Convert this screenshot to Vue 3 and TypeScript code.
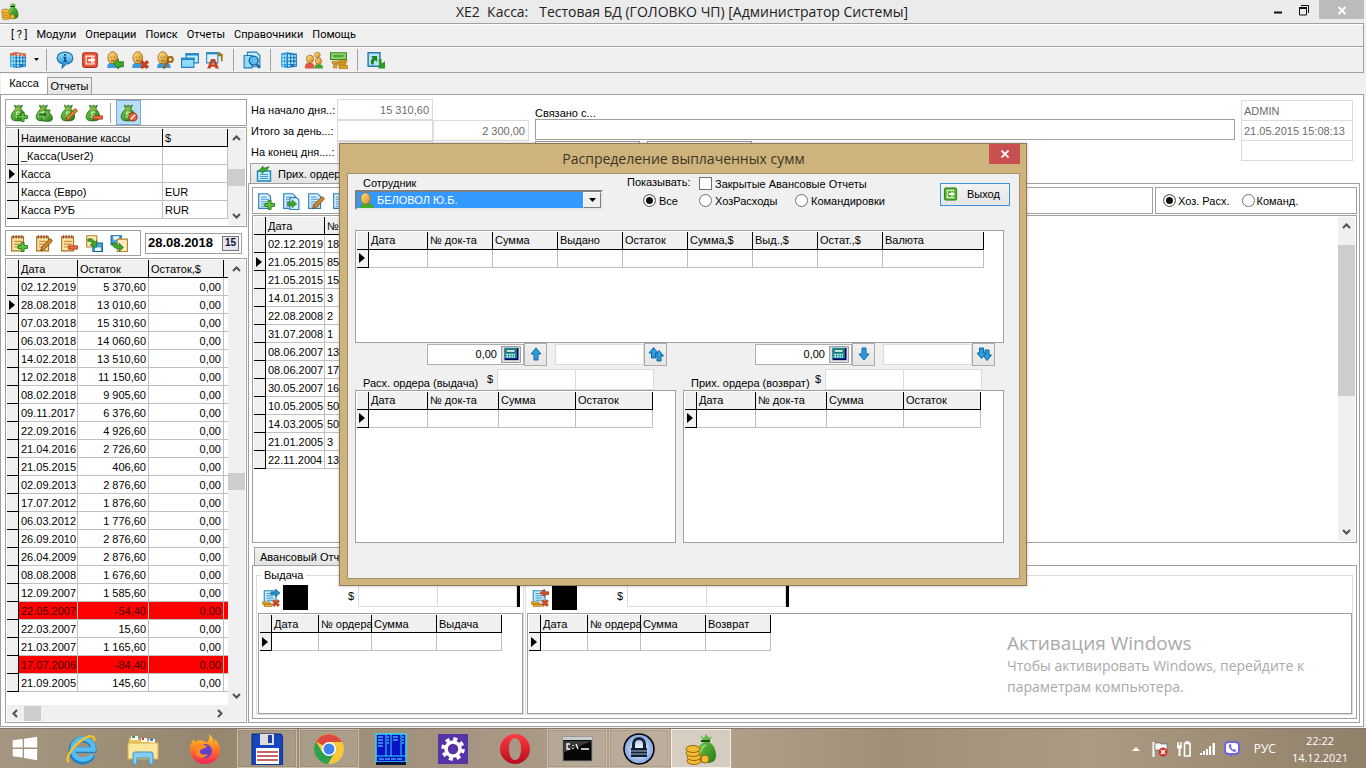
<script setup lang="ts">
import { ref } from 'vue'

interface Tool { id: string; label: string; layers: string[]; sep?: boolean; on?: boolean; drop?: boolean }
interface Order { title: string; id: string; one: string; many: string }

const menu = ['[ ? ]', 'Модули', 'Операции', 'Поиск', 'Отчеты', 'Справочники', 'Помощь']

const mainTools: Tool[] = [
  { id: 'm1', label: 'Касса', layers: ['building', 'roof'], drop: true },
  { id: 'm2', label: 'О программе', layers: ['info'], sep: true },
  { id: 'm3', label: 'Выход', layers: ['exit-red'] },
  { id: 'm4', label: 'Войти', layers: ['user', 'ov-left'] },
  { id: 'm5', label: 'Отключить', layers: ['user', 'ov-x'] },
  { id: 'm6', label: 'Пароль', layers: ['user', 'ov-key'] },
  { id: 'm7', label: 'Окна', layers: ['windows'] },
  { id: 'm8', label: 'Шрифт', layers: ['font'] },
  { id: 'm9', label: 'Поиск', layers: ['find'], sep: true },
  { id: 'm10', label: 'Организации', layers: ['building'], sep: true },
  { id: 'm11', label: 'Сотрудники', layers: ['people'] },
  { id: 'm12', label: 'Валюты', layers: ['cash'] },
  { id: 'm13', label: 'Обновить', layers: ['refresh'], sep: true },
]
const bagTools: Tool[] = [
  { id: 'b1', label: 'Добавить кассу', layers: ['bag', 'ov-plus'] },
  { id: 'b2', label: 'Копировать кассу', layers: ['bag', 'ov-bag'] },
  { id: 'b3', label: 'Изменить кассу', layers: ['bag', 'ov-pencil'] },
  { id: 'b4', label: 'Удалить кассу', layers: ['bag', 'ov-minus'] },
  { id: 'b5', label: 'Закрытые кассы', layers: ['bag', 'ov-no'], sep: true, on: true },
]
const dayTools: Tool[] = [
  { id: 'd1', label: 'Добавить день', layers: ['note', 'ov-plus'] },
  { id: 'd2', label: 'Изменить день', layers: ['note', 'ov-pencil'] },
  { id: 'd3', label: 'Удалить день', layers: ['note', 'ov-minus'] },
  { id: 'd4', label: 'Выгрузить', layers: ['export'] },
  { id: 'd5', label: 'Загрузить', layers: ['import'] },
]
const orderTools: Tool[] = [
  { id: 'o1', label: 'Добавить ордер', layers: ['doc', 'ov-plus'] },
  { id: 'o2', label: 'Копировать ордер', layers: ['doc', 'ov-doc'] },
  { id: 'o3', label: 'Изменить ордер', layers: ['doc', 'ov-pencil'] },
  { id: 'o4', label: 'Удалить ордер', layers: ['doc', 'ov-minus'] },
]

const desks = [['_Касса(User2)', ''], ['Касса', ''], ['Касса (Евро)', 'EUR'], ['Касса РУБ', 'RUR']]
const days = [
  ['02.12.2019', '5 370,60'], ['28.08.2018', '13 010,60'], ['07.03.2018', '15 310,60'], ['06.03.2018', '14 060,60'],
  ['14.02.2018', '13 510,60'], ['12.02.2018', '11 150,60'], ['08.02.2018', '9 905,60'], ['09.11.2017', '6 376,60'],
  ['22.09.2016', '4 926,60'], ['21.04.2016', '2 726,60'], ['21.05.2015', '406,60'], ['02.09.2013', '2 876,60'],
  ['17.07.2012', '1 876,60'], ['06.03.2012', '1 776,60'], ['26.09.2010', '2 876,60'], ['26.04.2009', '2 876,60'],
  ['08.08.2008', '1 676,60'], ['12.09.2007', '1 585,60'], ['22.05.2007', '-54,40'], ['22.03.2007', '15,60'],
  ['21.03.2007', '1 165,60'], ['17.07.2006', '-84,40'], ['21.09.2005', '145,60'],
]
const orders = [
  ['02.12.2019', '18'], ['21.05.2015', '85'], ['21.05.2015', '15'], ['14.01.2015', '3'], ['22.08.2008', '2'],
  ['31.07.2008', '1'], ['08.06.2007', '13'], ['08.06.2007', '17'], ['30.05.2007', '16'], ['10.05.2005', '50'],
  ['14.03.2005', '50'], ['21.01.2005', '3'], ['22.11.2004', '13'],
]
const reportCols = ['Дата', '№ док-та', 'Сумма', 'Выдано', 'Остаток', 'Сумма,$', 'Выд.,$', 'Остат.,$', 'Валюта']
const orderCols = ['Дата', '№ док-та', 'Сумма', 'Остаток']
const panes: Order[] = [
  { title: 'Расх. ордера (выдача)', id: 'out', one: 'up', many: 'up2' },
  { title: 'Прих. ордера (возврат)', id: 'in', one: 'down', many: 'down2' },
]
const groups = [
  { id: 'g1', legend: 'Выдача', icon: 'pay-out', last: 'Выдача' },
  { id: 'g2', legend: '', icon: 'pay-in', last: 'Возврат' },
]
const tasks = [
  { id: 't-win', label: 'Пуск', state: 'start' }, { id: 't-ie', label: 'Internet Explorer', state: '' },
  { id: 't-exp', label: 'Проводник', state: '' }, { id: 't-ff', label: 'Firefox', state: '' },
  { id: 't-disk', label: 'Total Commander', state: 'run' }, { id: 't-chrome', label: 'Chrome', state: 'run' },
  { id: 't-far', label: 'Far', state: '' }, { id: 't-gear', label: 'Параметры', state: '' },
  { id: 't-opera', label: 'Opera', state: '' }, { id: 't-cmd', label: 'Командная строка', state: 'run' },
  { id: 't-lock', label: 'KeePass', state: 'run' }, { id: 't-money', label: 'Касса', state: 'active' },
]
const kind = ref('all')
const mode = ref('house')
const closed = ref(false)
const day = ref('28.08.2018')
const amount = ref('0,00')
</script>

<template>
  <div class="screen">
    <svg class="defs" aria-hidden="true">
      <defs>
        <linearGradient id="gb" x1="0" y1="0" x2="0" y2="1"><stop offset="0" stop-color="#9fe3ff" /><stop offset="1" stop-color="#1583cf" /></linearGradient>
        <linearGradient id="gg" x1="0" y1="0" x2="1" y2="1"><stop offset="0" stop-color="#7dd65a" /><stop offset="1" stop-color="#237d14" /></linearGradient>
        <linearGradient id="gy" x1="0" y1="0" x2="1" y2="1"><stop offset="0" stop-color="#ffe694" /><stop offset="1" stop-color="#d08a18" /></linearGradient>
        <linearGradient id="gf" x1="0" y1="0" x2="0" y2="1"><stop offset="0" stop-color="#ffd12e" /><stop offset=".5" stop-color="#ff7a22" /><stop offset="1" stop-color="#f4205c" /></linearGradient>
        <linearGradient id="go" x1="0" y1="0" x2="0" y2="1"><stop offset="0" stop-color="#ff3b42" /><stop offset="1" stop-color="#b80c1c" /></linearGradient>
        <radialGradient id="gl"><stop offset="0" stop-color="#fff" /><stop offset="1" stop-color="#7da2e4" /></radialGradient>
      </defs>
      <symbol id="building" viewBox="0 0 16 16"><path d="M1 2l5-1v14l-5-1z" fill="#2f9fe3" /><path d="M6 1l9 1.500V14l-9 1z" fill="#1578bd" /><path d="M2 3.500h1.500v2H2zM4.200 3.200h1.200v2.300H4.200zM2 6.500h1.500v2H2zM4.200 6.500h1.200v2H4.200zM2 9.500h1.500v2H2zM4.200 9.500h1.200v2H4.200zM2 12.300h1.500v1.200H2zM7 3h2v2.500H7zM10 3.300h1.800v2.200H10zM12.800 3.500H14v2h-1.200zM7 6.500h2v2H7zM10 6.500h1.800v2H10zM12.800 6.500H14v2h-1.200zM7 9.500h2v2H7zM10 9.500h1.800v2H10zM12.800 9.500H14v2h-1.200zM7 12.300h2v1.500H7zM12.800 12.300H14v1h-1.200z" fill="#b9ecff" /></symbol>
      <symbol id="roof" viewBox="0 0 16 16"><path d="M1 2l5-1 9 1.500V5L6 3.500 1 4.500z" fill="#e9643b" /><path d="M7 2.500h2v1H7zM10.500 3h2v1h-2z" fill="#fbd8c8" /></symbol>
      <symbol id="info" viewBox="0 0 16 16"><path d="M8 1c4 0 7 2.200 7 5.200S12 11.500 9 11.500L5.500 15l.3-3.800C3 10.700 1 8.700 1 6.200 1 3.200 4 1 8 1z" fill="url(#gb)" stroke="#1874ac" /><path d="M7.200 2.700h1.800v1.600H7.200zM6.500 5.200h2.500v3.600h1v1H6.500v-1h.8V6.200h-.8z" fill="#0b4d87" /></symbol>
      <symbol id="exit-red" viewBox="0 0 16 16"><rect x="1.500" y="1.500" width="13" height="13" rx="2" fill="#e8593b" stroke="#ab3219" /><path d="M12 4H4v8h8v-2h-1v1H5V5h6v1h1z" fill="#fff" /><path d="M6.500 7H9V5l4 3-4 3V9H6.500z" fill="#fff" /></symbol>
      <symbol id="user" viewBox="0 0 16 16"><path d="M1 15c0-4 2-5 6-5s6 1 6 5z" fill="#3a9ce0" /><ellipse cx="6" cy="6" rx="4.300" ry="5.300" fill="url(#gy)" stroke="#a96c16" stroke-width=".8" /><path d="M4 5.500h1M7 5.500h1M4.500 8.500h3" stroke="#8a5513" stroke-width=".8" /></symbol>
      <symbol id="user-green" viewBox="0 0 16 16"><path d="M2 16c0-4 3-5 7-5s7 2 7 5z" fill="#47a929" /><ellipse cx="7.500" cy="6.500" rx="4.800" ry="5.800" fill="url(#gy)" stroke="#8a6420" stroke-width=".8" /></symbol>
      <symbol id="ov-left" viewBox="0 0 16 16"><path d="M6.500 11l4.500-4v2.500h4.500V14H11v2z" fill="#3cab25" stroke="#1f6e12" stroke-width=".7" /></symbol>
      <symbol id="ov-x" viewBox="0 0 16 16"><path d="M9 9l6 6M15 9l-6 6" stroke="#c8401c" stroke-width="3" /></symbol>
      <symbol id="ov-key" viewBox="0 0 16 16"><circle cx="12.700" cy="7.500" r="2.300" fill="#f6dc98" stroke="#94600e" stroke-width="1.600" /><path d="M11 9.500L6.500 14.500l1.500 1 M8.500 12l1.500 1.500" fill="none" stroke="#94600e" stroke-width="1.600" /></symbol>
      <symbol id="windows" viewBox="0 0 16 16"><path d="M4.500 2.500h11v8h-11z" fill="#bceaff" stroke="#2082bd" /><path d="M4 2h12v2H4z" fill="#2588c4" /><path d="M.5 6.500h11v8H.5z" fill="#92d9fa" stroke="#2082bd" /><path d="M0 6h12v2H0z" fill="#2588c4" /></symbol>
      <symbol id="font" viewBox="0 0 16 16"><path d="M.5 1.500h10v9H.5z" fill="#dff3fc" stroke="#2b8bc4" /><path d="M0 1h11v2H0z" fill="#2b8bc4" /><path d="M1 15.500L4.500 7h3.500l3.500 8.500H8.500L8 14H4.500L4 15.500zM5.200 12h2.200L6.200 9z" fill="#c8401c" /><path d="M14 9V4h-3.500" fill="none" stroke="#a37418" stroke-width="1.500" /><path d="M11 .5V4l4.500-.5z" fill="#a37418" /></symbol>
      <symbol id="find" viewBox="0 0 16 16"><path d="M4 1h8l3 3v10H4z" fill="#c9edff" stroke="#237bb8" /><path d="M1 4h7v11H1z" fill="#9cd9f8" stroke="#237bb8" /><circle cx="9.500" cy="8.500" r="4" fill="#5cbef0" stroke="#1766a1" stroke-width="1.200" /><path d="M12 11.500l3 3.500" stroke="#1766a1" stroke-width="2.200" /></symbol>
      <symbol id="people" viewBox="0 0 16 16"><circle cx="11" cy="3.500" r="2.500" fill="url(#gy)" stroke="#a96c16" stroke-width=".6" /><path d="M0 15.500c0-4 1-5 4-5s4.500 1 4.500 5z" fill="#df5740" /><circle cx="4.500" cy="7" r="3.300" fill="url(#gy)" stroke="#a96c16" stroke-width=".7" /><path d="M8.500 15.500c0-3 1-4 3.500-4s4 1 4 4z" fill="#43a42f" /><circle cx="12" cy="9" r="2.800" fill="url(#gy)" stroke="#a96c16" stroke-width=".7" /></symbol>
      <symbol id="cash" viewBox="0 0 16 16"><path d="M.5 1.500h14v6H.5z" fill="#8fd46d" stroke="#388a1f" /><path d="M3 3.500h9v2H3z" fill="#4aa330" /><path d="M8 8h7v2H8zM7 10.500h7v2H7zM8 13h8v2.500H8zM2 9h5v2H2zM3 12h3v3H3z" fill="#e3a820" stroke="#9f6a0d" stroke-width=".6" /></symbol>
      <symbol id="refresh" viewBox="0 0 16 16"><path d="M1 1.500h10.500v12H1z" fill="#b5e6fb" stroke="#2379ae" stroke-width="1.300" /><path d="M3.500 12V8.500L5 6 3.500 4.500H9V10L7.500 8 6 9.500V12z" fill="#23831a" /><path d="M10.500 7h2.500v4l3-2v6.500H9.500l2-2.500-1-1z" fill="#2f9a1f" /></symbol>
      <symbol id="bag" viewBox="0 0 16 16"><path d="M4 1l2 1 1.500-1L9 2l2-1-1.500 3.500C12 6 13 9 13 11.500 13 14 11 15 7 15s-6-1-6-3.500C1 9 3 6 5 4.500z" fill="url(#gg)" stroke="#1d6414" stroke-width=".7" /><path d="M4.500 4.500h5" stroke="#d6b13d" /><path d="M9 7.500c-4-1.500-4 1.500-2 2s1.500 3-2 1.500" fill="none" stroke="#d8f3ae" /></symbol>
      <symbol id="ov-plus" viewBox="0 0 16 16"><path d="M10 7.500h2.500v2.700H15.500v2.600h-3v2.700H10v-2.700H7v-2.600h3z" fill="#5dc83b" stroke="#1f7512" stroke-width=".8" /></symbol>
      <symbol id="ov-bag" viewBox="0 0 16 16"><path d="M8 5l2 1 1.500-1 2 .5-1 2c2 1.500 3 3.500 3 5.500 0 1.500-2 2.500-4.500 2.500S6 14.500 6 13c0-2 1-4 3-5.500z" fill="url(#gg)" stroke="#1d6414" stroke-width=".7" /><path d="M3 8h5V6l3.500 3.500L8 13v-2H3z" fill="#277d17" stroke="#d4f3b5" stroke-width=".5" /></symbol>
      <symbol id="ov-doc" viewBox="0 0 16 16"><path d="M7 5h6l2 2v8.500H7z" fill="#d5efff" stroke="#2d7ebc" /><path d="M5 9h4V7l4 3.500L9 14v-2H5z" fill="#3ba725" stroke="#1d6414" stroke-width=".5" /></symbol>
      <symbol id="ov-pencil" viewBox="0 0 16 16"><path d="M5 15l1-3.500L13.500 4l2 2L8.500 13.500z" fill="#d08a29" stroke="#74450d" stroke-width=".8" /></symbol>
      <symbol id="ov-minus" viewBox="0 0 16 16"><path d="M7.500 10.500h8v3h-8z" fill="#ef6a3c" stroke="#a92f13" stroke-width=".7" /></symbol>
      <symbol id="ov-no" viewBox="0 0 16 16"><circle cx="11.500" cy="11.500" r="3.700" fill="#e95f42" stroke="#a82d18" stroke-width=".9" /><path d="M9.500 13.500l4-4" stroke="#fff" stroke-width="1.200" /></symbol>
      <symbol id="note" viewBox="0 0 16 16"><path d="M1.500 2.500h10.500v12.500h-10.500z" fill="#fde6ab" stroke="#a6701b" /><path d="M3 1v3M5.500 1v3M8 1v3M10.500 1v3" stroke="#9b4322" stroke-width="1.200" /><path d="M3.500 6.500h7M3.500 9h7M3.500 11.500h7" stroke="#c48b33" /></symbol>
      <symbol id="export" viewBox="0 0 16 16"><path d="M1.500 1.500h9v10h-9z" fill="#fdebb9" stroke="#b68328" /><path d="M7 8h8.500v7.500H7z" fill="#43a6e4" stroke="#17679f" /><path d="M9 12h5v3H9z" fill="#fff" /><path d="M2.500 4.500c3-1 5 0 6 2.500l2-1-.5 6-5.500-2.500 2-1c-.5-1.500-2-2.500-4-2z" fill="#3eab27" stroke="#1d6414" stroke-width=".6" /></symbol>
      <symbol id="import" viewBox="0 0 16 16"><path d="M1 1.500h9v8H1z" fill="#43a6e4" stroke="#17679f" /><path d="M3 2h5v3H3z" fill="#fff" /><path d="M6.500 4.500h9v11h-9z" fill="#fdebb9" stroke="#b68328" /><path d="M2 8h3c0 2 1 2.500 3 2.500V8l4 4-4 3.500V13c-3 0-6-1-6-5z" fill="#3eab27" stroke="#1d6414" stroke-width=".6" /></symbol>
      <symbol id="doc" viewBox="0 0 16 16"><path d="M1.500 1.500h8l2.500 2.500v10.500h-10.500z" fill="#d5efff" stroke="#2d7ebc" /><path d="M3.500 4.500h5M3.500 6.500h7M3.500 8.500h7M3.500 10.500h7M3.500 12.500h7" stroke="#6aaede" /></symbol>
      <symbol id="box-in" viewBox="0 0 16 16"><path d="M1.500 5h13v10h-13z" fill="#c8ecfc" stroke="#1c87bd" stroke-width="1.400" /><path d="M4 8.500h8M4 10.500h8M4 12.500h8" stroke="#3c9fcb" /><path d="M3 4.500L7 0v2c2 0 4-.5 6-1.500-1 3-3 5-6 5v2z" fill="#3faa29" stroke="#1d6414" stroke-width=".6" /></symbol>
      <symbol id="slip" viewBox="0 0 16 16"><path d="M2 1.500h10.500v12H2z" fill="#c6ecfb" stroke="#2b8bbb" /><path d="M4 4h6M4 6h6M4 8h6M4 10h6" stroke="#3b9bc9" /><path d="M0 11.500h7v2H0zM2 13.500h7v2H2z" fill="#efb434" stroke="#a86b10" stroke-width=".6" /><path d="M10 10l5 5M15 10l-5 5" stroke="#c84b22" stroke-width="2.600" /></symbol>
      <symbol id="pay-out" viewBox="0 0 16 16"><use href="#slip" /><path d="M8 2.500h4V0l4 3.500L12 7V5H8z" fill="#238fcb" stroke="#125f90" stroke-width=".5" /></symbol>
      <symbol id="pay-in" viewBox="0 0 16 16"><use href="#slip" /><path d="M16 2.500h-4V0L8 3.500 12 7V5h4z" fill="#d3502a" stroke="#8e2f12" stroke-width=".5" /></symbol>
      <symbol id="exit-green" viewBox="0 0 16 16"><rect x="1.500" y="1.500" width="13" height="13" rx="1.500" fill="#55ae25" stroke="#2d7a10" /><path d="M12 3.500H4v9h8V11h-1v.5H5v-7h6V5h1z" fill="#fff" /><path d="M6.500 7H9V5l4 3-4 3V9H6.500z" fill="#fff" /></symbol>
      <symbol id="up" viewBox="0 0 16 16"><path d="M8 2l5 6h-3v6H6V8H3z" fill="#2b9de0" stroke="#14659d" /></symbol>
      <symbol id="down" viewBox="0 0 16 16"><path d="M8 14l5-6h-3V2H6v6H3z" fill="#2b9de0" stroke="#14659d" /></symbol>
      <symbol id="up2" viewBox="0 0 16 16"><path d="M11 4.500l4.500 5.500H13v5H9v-5H7z" fill="#2b9de0" stroke="#14659d" /><path d="M5.500 1.500L10 7H7.500v5h-4V7H1z" fill="#2b9de0" stroke="#14659d" /></symbol>
      <symbol id="down2" viewBox="0 0 16 16"><path d="M11 14.500L15.500 9H13V4H9v5H7z" fill="#2b9de0" stroke="#14659d" /><path d="M5.500 12.500L10 7H7.500V2h-4v5H1z" fill="#2b9de0" stroke="#14659d" /></symbol>
      <symbol id="calc" viewBox="0 0 18 16"><path d="M1 1h16v14H1z" fill="#000060" /><path d="M1 1h14v12H1z" fill="#18989a" /><path d="M3 3h10v3H3z" fill="#e8fff4" stroke="#033" stroke-width=".8" /><path d="M3 8h2v1.500H3zM6 8h2v1.500H6zM9 8h2v1.500H9zM12 8h1v1.500h-1zM3 10.500h2V12H3zM6 10.500h2V12H6zM9 10.500h2V12H9zM12 10.500h1V12h-1z" fill="#fff" /></symbol>
      <symbol id="t-win" viewBox="0 0 32 32"><path d="M3 7l11-1.500V15H3zM15.500 5.300L30 3v12H15.500zM3 16.500h11V26L3 24.500zM15.500 16.500H30V29l-14.500-2.500z" fill="#fff" /></symbol>
      <symbol id="t-ie" viewBox="0 0 32 32"><path d="M27.500 22a11 11 0 1 1 1-5H10" fill="none" stroke="#1c7fc4" stroke-width="6" /><path d="M27 21.500a10.500 10.500 0 1 1 1.500-5H10" fill="none" stroke="#55bdf2" stroke-width="4.500" /><path d="M4 29c-5-3 4-16 13-22 7-5 14-5 12 1" fill="none" stroke="#f6c12b" stroke-width="2.500" /></symbol>
      <symbol id="t-exp" viewBox="0 0 32 32"><path d="M2 5h9l2 2h15v17H2z" fill="#ecc65d" /><path d="M4 3h7v4H4z" fill="#fff" /><path d="M5 3h3v2H5z" fill="#35a343" /><path d="M14 5h6v4h-6z" fill="#fff" /><path d="M15 5h2v2h-2z" fill="#d33" /><path d="M22 6h6v4h-6z" fill="#fff" /><path d="M23 6h3v2h-3z" fill="#38c" /><path d="M1 10h30v16H1z" fill="#fae79b" stroke="#d9b04a" /><path d="M6 31V21q0-2 2-2h16q2 0 2 2v10h-4v-6H10v6z" fill="#86cdf0" stroke="#4695c5" /></symbol>
      <symbol id="t-ff" viewBox="0 0 32 32"><path d="M20 1c3 3 5 5 5 8 1-1 1-2 1-3 3 3 5 7 5 11a15 14 0 0 1-30 0c0-4 1-8 4-11l1 3 4-2c3 0 6 1 8 3 2-3 3-6 2-9z" fill="url(#gf)" /><circle cx="16" cy="18" r="7" fill="#6540c9" /><path d="M7 12c5-3 8 0 11 1-1 3-6 2-7 5s4 5 8 3c-2 4-9 5-12 0z" fill="#ff8b21" /></symbol>
      <symbol id="t-disk" viewBox="0 0 32 32"><path d="M1 1h29l2 3v28H1z" fill="#1646bd" stroke="#0a2672" /><path d="M9 1h14v11H9z" fill="#dedede" /><path d="M17 2h4v8h-4z" fill="#203f96" /><path d="M5 15h23v16H5z" fill="#fff" /><path d="M6 19h21M6 23h21M6 27h21" stroke="#b0303a" stroke-width="1.500" /></symbol>
      <symbol id="t-chrome" viewBox="0 0 32 32"><circle cx="16" cy="16" r="15" fill="#f9c73a" /><path d="M16 16L3 8.500A15 15 0 0 1 29 9H16z" fill="#dd4b3e" /><path d="M16 16l-6.500 3.500L3 8.500A15 15 0 0 0 15 31l7-12z" fill="#2fa050" /><circle cx="16" cy="16" r="7" fill="#fff" /><circle cx="16" cy="16" r="5.500" fill="#4083ee" /></symbol>
      <symbol id="t-far" viewBox="0 0 32 32"><path d="M1 1h30v28H1z" fill="#0712c8" stroke="#2ddde9" stroke-width="1.500" /><path d="M16 1v22M11 1v22M26 1v22M1 23h30" stroke="#2ddde9" /><path d="M3 4h6M3 7h6M3 10h6M3 13h6M12 4h2M12 7h2M12 10h2M18 4h6M18 7h6M27 4h2M27 7h2M27 10h2M4 26h24" stroke="#64f1ff" stroke-dasharray="5 1" /><path d="M1 29h30v3H1z" fill="#071536" /></symbol>
      <symbol id="t-gear" viewBox="0 0 32 32"><path d="M1 1h30v30H1z" fill="#5634a8" /><circle cx="16" cy="16" r="7" fill="none" stroke="#fff" stroke-width="3.500" /><circle cx="16" cy="16" r="10" fill="none" stroke="#fff" stroke-width="3.500" stroke-dasharray="4 3.850" /></symbol>
      <symbol id="t-opera" viewBox="0 0 32 32"><path fill-rule="evenodd" d="M16 1a15 15 0 1 0 0 30 15 15 0 1 0 0-30zm0 4c4 0 6 5 6 11s-2 11-6 11-6-5-6-11 2-11 6-11z" fill="url(#go)" /></symbol>
      <symbol id="t-cmd" viewBox="0 0 32 32"><path d="M2 4h29v24H2z" fill="#060606" stroke="#888" /><path d="M2 4h29v3H2z" fill="#c9cdd1" /><path d="M2 8h29L2 20z" fill="#393939" /><path d="M9 11H6v5h3M12 12v1M12 15v1M15 11l2 5M20 16h8" fill="none" stroke="#fff" stroke-width="1.300" /></symbol>
      <symbol id="t-lock" viewBox="0 0 32 32"><circle cx="16" cy="16" r="15" fill="url(#gl)" stroke="#000" stroke-width="1.500" /><path d="M10.500 15V11a5.500 5.500 0 0 1 11 0v4" fill="none" stroke="#15202f" stroke-width="3" /><path d="M8 15h16v9H8z" fill="#15202f" /><path d="M8 18h16M8 21h16" stroke="#9bb5e8" /></symbol>
      <symbol id="t-money" viewBox="0 0 32 32"><path d="M15 2l4 3 2-4 3 4 3-2-3 6c5 3 7 8 7 13 0 6-3 8-9 8-8 0-12-2-11-8 0-5 3-10 8-13z" fill="url(#gg)" /><path d="M16 8h9" stroke="#145309" stroke-width="2" /><path d="M21 12c-4 2-6 5-6 9" fill="none" stroke="#a4dc72" stroke-width="1.500" /><g fill="#f4bb30" stroke="#9a6410"><ellipse cx="9" cy="28" rx="7" ry="3.500" /><ellipse cx="9" cy="24" rx="7" ry="3.500" /><ellipse cx="8" cy="20" rx="7" ry="3.500" /><ellipse cx="8" cy="16" rx="7" ry="3.500" /><circle cx="20" cy="26" r="4" /></g></symbol>
    </svg>

    <main class="app">
      <header class="title">
        <svg class="i18"><use href="#t-money" /></svg>
        <h1>XE2 &nbsp;Касса: &nbsp;&nbsp;Тестовая БД (ГОЛОВКО ЧП) [Администратор Системы]</h1>
        <div class="wbtns">
          <button aria-label="Свернуть"><svg viewBox="0 0 10 12"><path d="M1 8.500h8" stroke="#111" stroke-width="2" /></svg></button>
          <button aria-label="Развернуть"><svg viewBox="0 0 10 12"><path d="M.5 4h7v7h-7zM2 1.500h7.500V9" fill="none" stroke="#111" /><path d="M0 4h8" stroke="#111" stroke-width="2" /></svg></button>
          <button class="wclose" aria-label="Закрыть"><svg viewBox="0 0 10 12"><path d="M1.500 3l7 7M8.500 3l-7 7" stroke="#fff" stroke-width="1.800" /></svg></button>
        </div>
      </header>
      <nav class="menu"><button v-for="m in menu" :key="m">{{ m }}</button></nav>
      <div class="tools main-tools">
        <template v-for="t in mainTools" :key="t.id">
          <i v-if="t.sep" class="sep" />
          <button class="tool" :aria-label="t.label"><svg><use v-for="l in t.layers" :key="l" :href="'#' + l" /></svg></button>
          <button v-if="t.drop" class="drop" aria-label="Выбор"><svg viewBox="0 0 5 3"><path d="M0 0h5L2.500 3z" /></svg></button>
        </template>
      </div>
      <div class="tabs"><button class="tab cur">Касса</button><button class="tab">Отчеты</button></div>

      <div class="page">
        <aside class="left">
          <div class="tools boxed">
            <template v-for="t in bagTools" :key="t.id">
              <i v-if="t.sep" class="sep" />
              <button class="tool" :class="{ on: t.on }" :aria-label="t.label"><svg><use v-for="l in t.layers" :key="l" :href="'#' + l" /></svg></button>
            </template>
          </div>
          <div class="grid desks">
            <div class="view">
              <table>
                <colgroup><col class="c12"><col class="c144"><col class="c65"></colgroup>
                <thead><tr><th /><th>Наименование кассы</th><th>$</th></tr></thead>
                <tbody><tr v-for="(d, i) in desks" :key="d[0]"><td class="ind"><i v-if="i === 1" class="mark" /></td><td>{{ d[0] }}</td><td>{{ d[1] }}</td></tr></tbody>
              </table>
            </div>
            <div class="vbar"><svg viewBox="0 0 9 6"><path d="M1 5l3.500-3.500L8 5" /></svg><b class="th1" /><svg viewBox="0 0 9 6"><path d="M1 1l3.500 3.500L8 1" /></svg></div>
          </div>
          <div class="dayrow">
            <div class="tools boxed">
              <button v-for="t in dayTools" :key="t.id" class="tool" :aria-label="t.label"><svg><use v-for="l in t.layers" :key="l" :href="'#' + l" /></svg></button>
            </div>
            <div class="date"><input v-model="day" aria-label="Дата"><button aria-label="Календарь">15</button></div>
          </div>
          <div class="grid days">
            <div class="view">
              <table>
                <colgroup><col class="c12"><col class="c59"><col class="c71"><col class="c75"><col class="c59"></colgroup>
                <thead><tr><th /><th>Дата</th><th>Остаток</th><th>Остаток,$</th><th /></tr></thead>
                <tbody>
                  <tr v-for="(d, i) in days" :key="d[0]" :class="{ red: d[1][0] === '-' }">
                    <td class="ind"><i v-if="i === 1" class="mark" /></td><td>{{ d[0] }}</td><td class="num">{{ d[1] }}</td><td class="num">0,00</td><td />
                  </tr>
                </tbody>
              </table>
            </div>
            <div class="vbar"><svg viewBox="0 0 9 6"><path d="M1 5l3.500-3.500L8 5" /></svg><b class="th2" /><svg viewBox="0 0 9 6"><path d="M1 1l3.500 3.500L8 1" /></svg></div>
            <div class="hbar"><svg viewBox="0 0 6 9"><path d="M5 1L1.500 4.500 5 8" /></svg><b /><svg viewBox="0 0 6 9"><path d="M1 1l3.500 3.500L1 8" /></svg></div>
            <div class="corner" />
          </div>
        </aside>

        <section class="right">
          <div class="summary">
            <div class="totals">
              <label for="s1">На начало дня..:</label><input id="s1" value="15 310,60" readonly><span />
              <label for="s2">Итого за день...:</label><input id="s2" value="" readonly><input value="2 300,00" aria-label="Расход за день" readonly>
              <label for="s3">На конец дня....:</label><input id="s3" value="" readonly>
            </div>
            <div class="link">
              <label for="lnk">Связано с...</label><input id="lnk" value="">
              <div class="stubs"><i /><i /></div>
            </div>
            <div class="stamp"><input value="ADMIN" aria-label="Пользователь" readonly><input value="21.05.2015 15:08:13" aria-label="Изменено" readonly><input value="" aria-label="Примечание" readonly></div>
          </div>
          <div class="subtabs"><button><svg><use href="#box-in" /></svg>Прих. ордер</button></div>
          <div class="panel">
            <div class="orow">
              <div class="tools boxed">
                <button v-for="t in orderTools" :key="t.id" class="tool" :aria-label="t.label"><svg><use v-for="l in t.layers" :key="l" :href="'#' + l" /></svg></button>
              </div>
              <div class="modes">
                <label><input v-model="mode" type="radio" name="mode" value="house">Хоз. Расх.</label>
                <label><input v-model="mode" type="radio" name="mode" value="trip">Команд.</label>
              </div>
            </div>
            <div class="grid orders">
              <div class="view">
                <table>
                  <colgroup><col class="c12"><col class="c59"><col class="c65"></colgroup>
                  <thead><tr><th /><th>Дата</th><th>№</th></tr></thead>
                  <tbody><tr v-for="(o, i) in orders" :key="i"><td class="ind"><i v-if="i === 1" class="mark" /></td><td>{{ o[0] }}</td><td>{{ o[1] }}</td></tr></tbody>
                </table>
              </div>
              <div class="vbar"><svg viewBox="0 0 9 6"><path d="M1 5l3.500-3.500L8 5" /></svg><b class="th3" /><svg viewBox="0 0 9 6"><path d="M1 1l3.500 3.500L8 1" /></svg></div>
            </div>
            <div class="subtabs low"><button>Авансовый Отч</button></div>
            <div class="advance">
              <fieldset v-for="g in groups" :key="g.id" class="group">
                <legend v-if="g.legend">{{ g.legend }}</legend>
                <div class="sums">
                  <button class="tool" aria-label="Снять оплату"><svg><use :href="'#' + g.icon" /></svg></button><i class="sq" />
                  <label :for="g.id">$</label><input :id="g.id" readonly><input aria-label="Остаток" readonly><i class="bar" />
                </div>
                <div class="grid">
                  <table>
                    <colgroup><col class="c12"><col class="c47"><col class="c53"><col class="c65"><col class="c65"></colgroup>
                    <thead><tr><th /><th>Дата</th><th>№ ордера</th><th>Сумма</th><th>{{ g.last }}</th></tr></thead>
                    <tbody><tr><td class="ind"><i class="mark" /></td><td /><td /><td /><td /></tr></tbody>
                  </table>
                </div>
              </fieldset>
            </div>
          </div>
        </section>
      </div>
    </main>

    <div class="layer">
      <section class="dialog" role="dialog" aria-labelledby="dt">
        <header><h2 id="dt">Распределение выплаченных сумм</h2><button aria-label="Закрыть"><svg viewBox="0 0 8 8"><path d="M.5.5l7 7M7.500.5l-7 7" stroke="#fff" stroke-width="1.800" /></svg></button></header>
        <div class="client">
          <div class="filter">
            <div class="who">
              <label for="emp">Сотрудник</label>
              <div class="combo"><svg class="face"><use href="#user-green" /></svg><select id="emp"><option>БЕЛОВОЛ Ю.Б.</option></select><span class="arrow"><svg viewBox="0 0 7 4"><path d="M0 0h7L3.500 4z" /></svg></span></div>
            </div>
            <div class="show">
              <span class="cap">Показывать:</span>
              <label class="wide"><input v-model="closed" type="checkbox">Закрытые Авансовые Отчеты</label>
              <label class="first"><input v-model="kind" type="radio" name="kind" value="all">Все</label>
              <label><input v-model="kind" type="radio" name="kind" value="house">ХозРасходы</label>
              <label><input v-model="kind" type="radio" name="kind" value="trip">Командировки</label>
            </div>
            <button class="exit"><svg><use href="#exit-green" /></svg>Выход</button>
          </div>
          <div class="grid reports">
            <table>
              <colgroup><col class="c12"><col class="c59"><col v-for="n in 7" :key="n" class="c65"><col class="c101"></colgroup>
              <thead><tr><th /><th v-for="c in reportCols" :key="c">{{ c }}</th></tr></thead>
              <tbody><tr><td class="ind"><i class="mark" /></td><td v-for="c in reportCols" :key="c" /></tr></tbody>
            </table>
          </div>
          <div class="panes">
            <div v-for="p in panes" :key="p.id" class="pane">
              <div class="amount">
                <div class="calc"><input v-model="amount" :aria-label="p.title"><button aria-label="Калькулятор"><svg><use href="#calc" /></svg></button></div>
                <button class="sqb" aria-label="Перенести"><svg><use :href="'#' + p.one" /></svg></button>
                <input class="soft" aria-label="Итого" readonly>
                <button class="sqb" aria-label="Перенести все"><svg><use :href="'#' + p.many" /></svg></button>
              </div>
              <div class="caption"><span>{{ p.title }}</span><label :for="p.id">$</label><input :id="p.id" readonly><input aria-label="Остаток" readonly></div>
              <div class="grid">
                <table>
                  <colgroup><col class="c12"><col class="c59"><col class="c71"><col class="c77"><col class="c77"></colgroup>
                  <thead><tr><th /><th v-for="c in orderCols" :key="c">{{ c }}</th></tr></thead>
                  <tbody><tr><td class="ind"><i class="mark" /></td><td v-for="c in orderCols" :key="c" /></tr></tbody>
                </table>
              </div>
            </div>
          </div>
        </div>
      </section>
    </div>

    <div class="watermark"><p class="big">Активация Windows</p><p>Чтобы активировать Windows, перейдите к параметрам компьютера.</p></div>

    <footer class="taskbar">
      <button v-for="t in tasks" :key="t.id" :class="t.state" :aria-label="t.label"><svg><use :href="'#' + t.id" /></svg></button>
      <div class="tray">
        <svg class="hid" viewBox="0 0 8 5"><path d="M0 5l4-4 4 4z" fill="#fff" /></svg>
        <svg viewBox="0 0 16 16"><path d="M1.500 1v15" stroke="#fff" stroke-width="2" /><path d="M3 2h5l1 1h6v7H8L7 9H3z" fill="#fff" stroke="#555" stroke-width=".6" /><circle cx="11" cy="11" r="4.500" fill="#d2342d" /><path d="M9 9l4 4M13 9l-4 4" stroke="#fff" stroke-width="1.500" /></svg>
        <svg viewBox="0 0 16 16"><path d="M8.500 2.500h5.500V15H8.500zM10 1h2.500v1H10z" fill="none" stroke="#fff" stroke-width="1.600" /><path d="M2 1v3M5 1v3" stroke="#fff" stroke-width="1.400" /><path d="M1 4h5v3L4.500 8v7h-2V8L1 7z" fill="#fff" /></svg>
        <svg viewBox="0 0 16 16"><path d="M0 12h2v2H0zM3 10h2v4H3zM6 8h2v6H6zM9 5h2v9H9zM12.500 2h2.500v12h-2.500z" fill="#fff" /></svg>
        <svg viewBox="0 0 16 16"><path d="M5 0h6q5 0 5 5v4q0 5-5 5H9l-3 2v-2H5q-5 0-5-5V5q0-5 5-5z" fill="#7163e8" /><path d="M5 2h6q3 0 3 3v4q0 3-3 3H5q-3 0-3-3V5q0-3 3-3z" fill="#fff" /><path d="M5 3.500C4 7 8 11 11.500 11l.5-2-2-1-1 .8L6.700 6l1-1L6.500 3z" fill="#7163e8" /></svg>
        <span class="lang">РУС</span>
        <span class="clock">22:22<br>14.12.2021</span>
      </div>
    </footer>
  </div>
</template>

<style>
html, body { margin: 0; background: #f0f0f0; }
</style>

<style scoped>
* { box-sizing: border-box; }
.screen { position: relative; display: flex; flex-direction: column; height: 100vh; overflow: hidden; background: #f0f0f0; color: #000; font: 11px/14px "Liberation Sans", Arial, sans-serif; }
.defs { position: absolute; width: 0; height: 0; }
button, input, select { font: inherit; color: inherit; margin: 0; padding: 0; border: 0; background: none; border-radius: 0; outline: none; min-width: 0; }
h1, h2, p { margin: 0; font-weight: 400; }
svg { display: block; flex: none; }
.app { flex: 1; min-height: 0; display: flex; flex-direction: column; padding: 0 2px 1px 0; }

.title { display: grid; grid-template-columns: 1fr auto 1fr; height: 23px; background: #ebebeb; }
.i18 { width: 18px; height: 18px; margin: 2px 0 0 1px; }
.title h1 { font: 14px/23px "Open Sans", "Noto Sans", sans-serif; color: #222; }
.wbtns { display: flex; justify-content: flex-end; }
.wbtns button { width: 26px; height: 19px; display: grid; place-items: center; }
.wbtns svg { width: 10px; height: 12px; }
.wbtns .wclose { width: 45px; background: #bcbcbc; margin-left: 2px; }
.menu { display: flex; height: 23px; border: solid #a0a0a0; border-width: 1px 1px 0 0; padding-left: 11px; gap: 9px; font: 11px/14px Roboto, "Open Sans", sans-serif; box-shadow: inset 0 1px #fff; }
.tools { display: flex; align-items: center; }
.main-tools { height: 27px; border: solid #a0a0a0; border-width: 1px 1px 1px 0; padding-left: 5px; box-shadow: inset 0 1px #fff; }
.tool { width: 25px; height: 25px; display: grid; place-items: center; flex: none; }
.tool svg { width: 18px; height: 18px; }
.tool.on { background: #b9dcf7; border: 1px solid #70aee0; }
.drop { width: 12px; height: 20px; display: grid; place-items: center; }
.drop svg { width: 5px; height: 3px; }
.sep { width: 1px; height: 22px; margin: 0 5px 0 6px; background: #a0a0a0; }
.drop + .sep { margin-left: 4px; }
.tabs { display: flex; align-items: flex-end; height: 21px; padding-left: 1px; }
.tab { height: 17px; width: 45px; border: 1px solid #a0a0a0; border-bottom: 0; background: linear-gradient(#f2f2f2, #e4e4e4); }
.tab.cur { height: 20px; width: 46px; background: #fff; border-width: 0; padding-bottom: 3px; }

.page { flex: 1; min-height: 0; display: flex; gap: 1px; border: 1px solid #a0a0a0; padding: 4px 3px 3px 4px; background: #fff; }
.left { width: 242px; flex: none; display: flex; flex-direction: column; }
.boxed { height: 27px; border: 1px solid #a0a0a0; background: #fff; }
.boxed .sep { height: 20px; margin: 0 5px 0 4px; }
.grid { border: 1px solid #a0a0a0; padding: 1px; background: #fff; overflow: hidden; }
.view { overflow: hidden; min-width: 0; }
.desks { display: flex; height: 100px; margin-top: 1px; }
.desks .view, .days .view { width: 221px; }
.dayrow { display: flex; align-items: center; gap: 4px; margin: 3px 0 2px; }
.dayrow .tools { width: 136px; height: 26px; }
.date { display: flex; align-items: center; justify-content: space-between; width: 97px; height: 21px; border: 1px solid #a0a0a0; padding: 0 2px; }
.date input { width: 70px; font-size: 13px; font-weight: 700; }
.date button { width: 17px; height: 15px; border: 1px solid #777; background: #e4e4ee; font: 700 10px/12px "Liberation Sans", sans-serif; color: #113; }
.days { flex: 1; min-height: 0; display: grid; grid-template: minmax(0, 1fr) 16px / 221px 1fr; }
.vbar { flex: 1; display: flex; flex-direction: column; align-items: center; background: #f0f0f0; padding: 6px 0; }
.vbar svg { width: 9px; height: 6px; }
.vbar svg, .hbar svg { fill: none; stroke: #505050; stroke-width: 2; }
.vbar b { width: 100%; background: #cdcdcd; }
.vbar svg:last-child { margin-top: auto; }
.th1 { height: 17px; margin-top: 28px; }
.th2 { height: 17px; margin-top: 201px; }
.th3 { height: 151px; margin-top: 16px; }
.hbar { display: flex; align-items: center; background: #f0f0f0; padding: 0 5px; }
.hbar svg { width: 6px; height: 9px; }
.hbar b { width: 17px; height: 15px; margin-left: 6px; background: #cdcdcd; }
.hbar svg:last-child { margin-left: auto; }
.corner { background: #f0f0f0; }

table { border-collapse: separate; border-spacing: 0; table-layout: fixed; width: 0; }
th, td { height: 18px; padding: 0 2px; border: solid #c0c0c0; border-width: 0 1px 1px 0; white-space: nowrap; line-height: 16px; }
th { padding: 0 0 0 2px; border-color: #000; background: #f0f0f0; font-weight: 400; text-align: left; }
.ind { background: #f0f0f0; border-color: #000; }
.num { text-align: right; }
.red td:not(.ind) { background: #f00; color: #400; }
.mark { display: block; border: solid transparent; border-width: 5px 0 5px 6px; border-left-color: #000; }
.c12 { width: 12px; } .c47 { width: 47px; } .c53 { width: 53px; } .c59 { width: 59px; } .c65 { width: 65px; }
.c71 { width: 71px; } .c75 { width: 75px; } .c77 { width: 77px; } .c101 { width: 101px; } .c144 { width: 144px; }

.right { flex: 1; min-width: 0; display: flex; flex-direction: column; }
.summary { display: flex; height: 64px; padding: 0 7px 0 3px; }
.totals { display: grid; grid-template: repeat(3, 21px) / 86px 96px 96px; align-items: center; }
.totals input, .stamp input { height: 21px; border: 1px solid #dcdcdc; padding: 0 3px 0 2px; color: #6d6d6d; }
.totals input { text-align: right; width: 96px; }
.link { flex: 1; margin-left: 6px; display: flex; flex-direction: column; padding-top: 7px; }
.link label { height: 13px; }
.link input { height: 21px; width: 100%; border: 1px solid #a0a0a0; }
.stubs { display: flex; gap: 7px; }
.stubs i { width: 105px; height: 16px; margin-top: 1px; border: 1px solid #a0a0a0; }
.stamp { width: 112px; margin: 1px 0 0 6px; display: flex; flex-direction: column; }
.stamp input { width: 112px; margin-bottom: -1px; }
.subtabs { display: flex; padding-left: 2px; height: 20px; }
.subtabs button { display: flex; align-items: center; gap: 6px; min-width: 140px; padding: 0 5px; border: 1px solid #a0a0a0; border-bottom: 0; background: linear-gradient(#f2f2f2, #e4e4e4); }
.subtabs svg { width: 16px; height: 16px; }
.panel { flex: 1; min-height: 0; display: flex; flex-direction: column; border: 1px solid #a0a0a0; padding: 3px 2px 3px 3px; }
.orow { display: flex; gap: 2px; }
.orow .boxed { flex: 1; }
.modes { width: 202px; height: 27px; border: 1px solid #a0a0a0; display: flex; align-items: center; gap: 12px; padding-left: 7px; }
label { display: flex; align-items: center; gap: 2px; white-space: nowrap; }
input[type=radio], input[type=checkbox] { appearance: none; width: 13px; height: 13px; flex: none; border: 1px solid #707070; background: #fff; }
input[type=radio] { border-radius: 50%; }
input[type=radio]:checked { background: #111; box-shadow: inset 0 0 0 2px #fff; }
.orders { flex: 1; min-height: 0; display: flex; margin-top: 1px; }
.orders .view { flex: 1; }
.orders .vbar { flex: none; width: 17px; }
.low { height: 22px; padding: 4px 0 0 2px; }
.low button { min-width: 110px; }
.advance { display: flex; gap: 1px; height: 154px; border: 1px solid #a0a0a0; padding: 2px 3px 3px; }
.group { position: relative; margin: 7px 0 0; padding: 9px 0 0 1px; border: 1px solid #dcdcdc; display: flex; flex-direction: column; width: 268px; min-width: 0; flex: none; }
.group:last-child { flex: 1; }
.group legend { position: absolute; top: -8px; left: 4px; padding: 0 3px; background: #fff; }
.sums { display: flex; height: 26px; align-items: flex-start; margin-bottom: 2px; }
.sq { width: 25px; height: 25px; background: #000; margin-right: 40px; }
.sums label { width: 10px; height: 22px; }
.sums input { width: 80px; height: 22px; border: 1px solid #dcdcdc; margin-right: -1px; }
.sums .bar { width: 3px; height: 22px; background: #000; margin-left: 1px; }
.group .grid { flex: 1; }

.layer { position: absolute; inset: 0 0 40px; display: grid; place-items: center; pointer-events: none; }
.dialog { width: 688px; pointer-events: auto; background: #ceb37d; border: 1px solid #917b52; padding: 0 6px 6px 7px; box-shadow: 0 0 3px #0004; }
.dialog header { display: flex; justify-content: center; position: relative; height: 29px; }
.dialog h2 { font: 14px/29px "Open Sans", "Noto Sans", sans-serif; color: #3d3524; }
.dialog header button { position: absolute; right: 0; top: 0; width: 31px; height: 20px; display: grid; place-items: center; background: #c85051; }
.dialog header svg { width: 8px; height: 8px; }
.client { border: 1px solid #a58f63; background: #f0f0f0; padding: 0 15px 35px 7px; }
.filter { display: flex; height: 56px; margin-right: -6px; }
.who { width: 248px; padding-top: 2px; }
.who label { padding-left: 8px; height: 14px; }
.combo { display: flex; height: 20px; background: #3399ff; border: 2px solid #808080; border-right-color: #e8e8e8; border-bottom-color: #e8e8e8; }
.face { width: 16px; height: 16px; margin-left: 1px; }
.combo select { flex: 1; appearance: none; background: #3399ff; color: #fff; padding-left: 3px; }
.arrow { width: 18px; display: grid; place-items: center; background: #f0f0f0; border: 1px solid #808080; border-top-color: #fff; border-left-color: #fff; }
.arrow svg { width: 7px; height: 4px; }
.show { display: grid; grid-template: 18px 16px / 72px 96px auto; margin-left: 24px; padding-top: 1px; height: 36px; }
.show .wide { grid-column: span 2; }
.show .first { padding-left: 16px; }
.show label { gap: 3px; }
.exit { display: flex; align-items: center; gap: 9px; width: 70px; height: 23px; margin: 9px 0 0 auto; padding-left: 2px; border: 1px solid #3c94dc; background: linear-gradient(#f3f3f3, #e6e6e6); }
.exit svg { width: 15px; height: 16px; }
.reports { height: 113px; }
.panes { display: grid; grid-template-columns: 1fr 1fr; gap: 7px; }
.amount { display: flex; align-items: center; height: 23px; padding-left: 72px; }
.calc { display: flex; align-items: center; width: 97px; height: 21px; border: 1px solid #b0b0b0; background: #fff; padding-right: 2px; gap: 4px; }
.calc input { flex: 1; text-align: right; }
.calc button { border: 1px solid #a0a0a0; background: #ddd; height: 17px; width: 20px; display: grid; place-items: center; }
.calc svg { width: 17px; height: 14px; }
.sqb { width: 23px; height: 23px; border: 1px solid #acacac; background: linear-gradient(#f1f1f1, #e5e5e5); display: grid; place-items: center; flex: none; }
.sqb svg { width: 16px; height: 16px; }
.soft { width: 89px; height: 21px; margin-left: 8px; border: 1px solid #dcdcdc; background: #fff; }
.caption { display: flex; align-items: center; height: 21px; margin-top: 3px; padding-left: 8px; }
.caption span { width: 124px; padding-top: 8px; white-space: nowrap; }
.caption label { width: 10px; }
.caption input { width: 79px; height: 21px; border: 1px solid #dcdcdc; background: #fff; margin-right: -1px; }
.pane .grid { height: 153px; }

.watermark { position: absolute; left: calc(100% - 359px); bottom: 71px; width: 320px; color: #a9a9a9; font: 14px/21px "Open Sans", "Noto Sans", sans-serif; pointer-events: none; }
.watermark .big { font-size: 19px; line-height: 24px; }

.taskbar { height: 40px; flex: none; display: flex; align-items: center; gap: 2px; background: linear-gradient(90deg, #a59681, #95876f 15%, #a59582 35%, #b5a38e 50%, #a18f78 65%, #ac9b82 80%, #8f806a); border-top: 1px solid #85786a; }
.taskbar button { width: 60px; height: 39px; display: grid; place-items: center; }
.taskbar .start { width: 49px; }
.taskbar svg { width: 32px; height: 32px; }
.taskbar .start svg { width: 29px; height: 29px; }
.taskbar .run { border: 1px solid #c9bcab; background: #ffffff22; box-shadow: inset 0 0 0 1px #81746344; }
.taskbar .active { border: 1px solid #f5f1ea; background: #ffffff77; }
.tray { margin-left: auto; display: flex; align-items: center; gap: 8px; color: #fff; padding-right: 18px; font: 12px/17px "Open Sans", "Noto Sans", sans-serif; }
.taskbar .tray svg { width: 16px; height: 16px; }
.taskbar .tray .hid { width: 8px; height: 5px; margin-right: 4px; }
.lang { margin: 0 8px 0 6px; }
.clock { text-align: center; font-size: 11px; }
</style>
